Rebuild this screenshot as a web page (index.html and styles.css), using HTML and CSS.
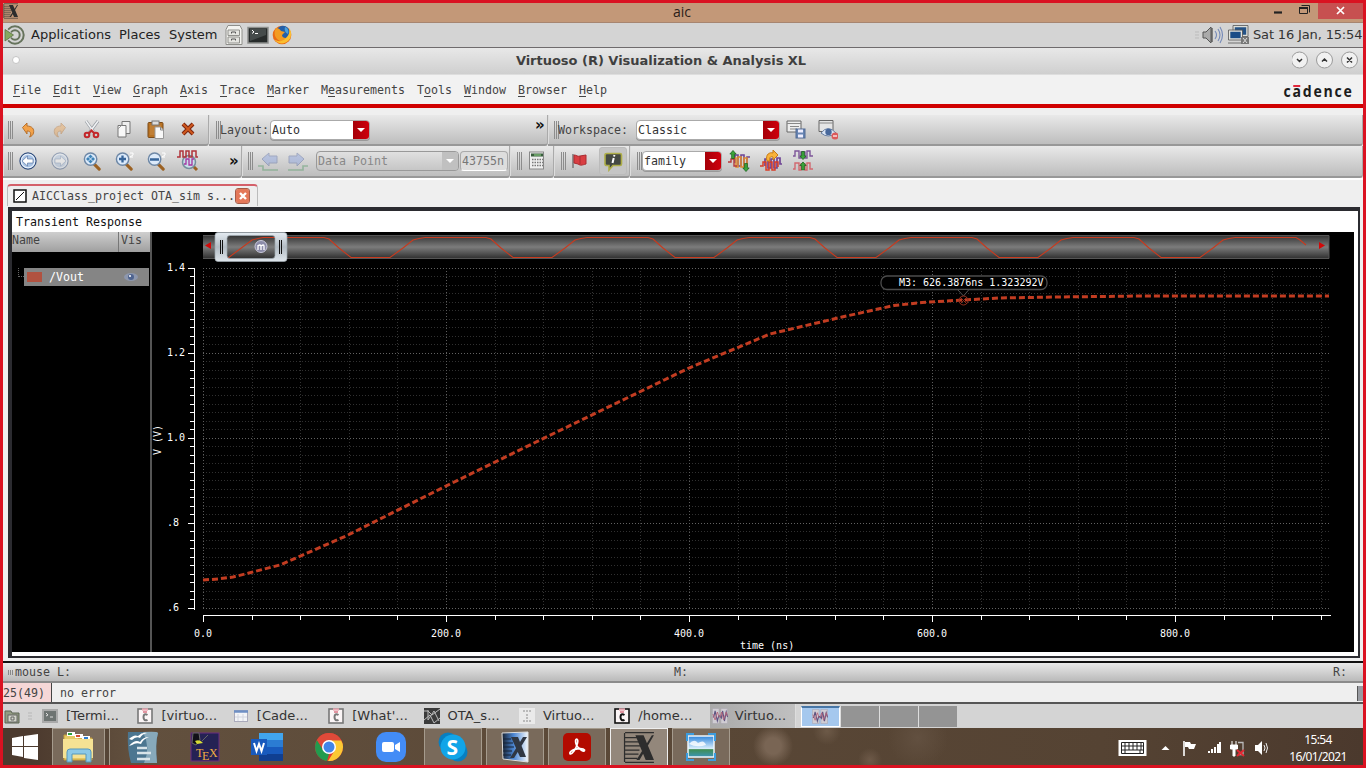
FILE: index.html
```html
<!DOCTYPE html>
<html lang="en">
<head>
<meta charset="utf-8">
<title>aic</title>
<link rel="stylesheet" href="styles.css">
</head>
<body>
<svg class="defs" width="0" height="0">
  <defs>
    <linearGradient id="bar" x1="0" y1="0" x2="0" y2="1"><stop offset="0" stop-color="#303030"/><stop offset=".5" stop-color="#7c7c7c"/><stop offset="1" stop-color="#2c2c2c"/></linearGradient>
    <linearGradient id="cap" x1="0" y1="0" x2="0" y2="1"><stop offset="0" stop-color="#e4ebf1"/><stop offset=".5" stop-color="#b3bcc4"/><stop offset="1" stop-color="#dfe6ec"/></linearGradient>
    <linearGradient id="sky" x1="0" y1="0" x2="0" y2="1"><stop offset="0" stop-color="#2f86dc"/><stop offset=".6" stop-color="#d9eefc"/><stop offset=".65" stop-color="#3f8d55"/><stop offset="1" stop-color="#3c95b8"/></linearGradient>
    <linearGradient id="xg"><stop offset="0" stop-color="#16202f"/><stop offset=".45" stop-color="#4b86d4"/><stop offset="1" stop-color="#f4f8fc"/></linearGradient>
    <symbol id="xwin" viewBox="0 0 32 32"><path d="M2 1.500H30M2 6.500H15M2 10.500H16M2 14.500H17M2 18.500H16M2 22.500H15M2 26.500H14M2 30.500H30M1.500 2V30" stroke="#2d2d2d" stroke-width="1.200" fill="none"/><path d="M12 4h8l10 24h-8zM28 4h2L16 28h-3z" fill="#2d2d2d"/></symbol>
    <symbol id="wave" viewBox="0 0 18 16" preserveAspectRatio="none"><path d="M.5.5h7.500v15H.5zM10 .5h7.500v15H10z" fill="#d0cdd3" stroke="#aaa6b0" stroke-width=".6"/><path d="M1 9h1l1.500-6L6 13l1.500-5H9l1.500 2L12 3l2 10 2-9 1.500 5" fill="none" stroke="#5c5280" stroke-width="1.200"/><path d="M1 6l2.500 6L6 4l2 5h1l2-5 2 8 3-8 1 4" fill="none" stroke="#b5637a" stroke-width=".9"/></symbol>
    <symbol id="cad" viewBox="0 0 16 16"><rect x="1" y="1" width="14" height="14" fill="#fbf5f6" stroke="currentColor" stroke-width="1.600"/><path d="M5 1.500h6" stroke="#e9aab4" stroke-width="2.400"/><path d="M6 4h4" stroke="#d25468" stroke-width="1.200"/><path d="M10.500 7C8 5.500 6.500 6.500 6.500 9s1.500 4.200 4 2.800" fill="none" stroke="currentColor" stroke-width="2"/></symbol>
    <symbol id="mag" viewBox="0 0 22 22"><path d="M12 13l6 6" stroke="#9b6122" stroke-width="3.200" stroke-linecap="round"/><circle cx="9" cy="8.500" r="6.500" fill="#dceafa" stroke="#6d87a6" stroke-width="1.500"/></symbol>
    <symbol id="nav" viewBox="0 0 20 20"><circle cx="10" cy="10" r="8" fill="#a9c3e4" stroke="#2f4c7c" stroke-width="1.300"/><circle cx="10" cy="10" r="6.800" fill="none" stroke="#e8f0fa" stroke-width="1.200"/><path d="M4 10l5.500-5v3H15v4H9.500v3z" fill="#fff" stroke="#4a6a98" stroke-width=".6"/></symbol>
    <symbol id="undo" viewBox="0 0 20 20"><path d="M4.500 7.500L9 3v3c5 0 7.500 3 6.500 7-.5 2-2 3.500-4 4 2-2.500 1.800-6-2.500-6v3z" fill="#f2a24a" stroke="#b36a22" stroke-width=".9"/></symbol>
    <symbol id="grn" viewBox="0 0 8 10"><path d="M4 .5l3.500 4h-2v5h-3v-5h-2z" fill="#3ba53b" stroke="#145e18" stroke-width=".8"/></symbol>
  </defs>
</svg>
<div class="screen">
  <header class="titlebar">
    <svg class="title-x" width="16" height="16"><use href="#xwin"/></svg>
    <span class="title-text">aic</span>
    <div class="win-buttons">
      <svg width="50" height="19"><path d="M5 9.500h8" stroke="#222" stroke-width="2.200"/><path d="M30.500 4.500h8v6h-8zM32.500 2.500h8v7" fill="none" stroke="#222"/><path d="M30 5h9" stroke="#222" stroke-width="2"/></svg>
      <div class="win-close"><svg width="9" height="9"><path d="M1 1l7 7M8 1L1 8" stroke="#fff" stroke-width="1.700"/></svg></div>
    </div>
  </header>

  <div class="panel">
    <svg width="22" height="22"><circle cx="12" cy="11" r="8.700" fill="none" stroke="#66735c" stroke-width="2"/><circle cx="12" cy="11" r="4.700" fill="none" stroke="#66735c" stroke-width="2"/><path d="M0 1l11 10L0 21z" fill="#d4d4d4"/><path d="M2 5.500l8.500 5.500L2 17z" fill="#86a85f" stroke="#596e43" stroke-width=".8"/></svg>
    <span class="p-app">Applications</span><span class="p-places">Places</span><span class="p-sys">System</span>
    <svg class="p-icons" width="68" height="22">
      <path d="M3 1.500h12l2 4v15H1v-15z" fill="#f3f3f0" stroke="#8e8e8a"/><path d="M3 6h11.500v5.500H3zM3 13h11.500v6H3z" fill="#e5e5e1" stroke="#91918d"/><path d="M6.500 9.500V8h4v1.500M6.500 16.500V15h4v1.500" stroke="#555" fill="none"/>
      <rect x="23" y="3.500" width="20" height="15.500" fill="#272b2b" stroke="#8d8f8d" stroke-width="1.500"/><path d="M25 5h16v6l-16 6z" fill="#454b4b"/><path d="M27 6l2 2-2 1.500M30 9.500h3" stroke="#fff" fill="none"/>
      <circle cx="57" cy="11" r="9.300" fill="#e96a16"/><circle cx="58" cy="8.500" r="6.800" fill="#245fa8"/><path d="M51 4c2 0 4 1 5 3l4 1-3 3c0 3 4 4 7 2-1 4-5 6-9 4-5-2-7-8-4-13z" fill="#f39b22"/><path d="M64 4c3 3 3 10-1 13-4 4-11 3-14-2 3 3 9 3 12-1 3-3 4-6 3-10z" fill="#fbbf31"/><path d="M60 3c3 1 4 4 3 7-2-1-4-3-3-7z" fill="#49a1dc"/>
    </svg>
    <div class="p-right">
      <svg width="60" height="22"><path d="M2 8h4M2 11h4M2 14h4" stroke="#bbb"/><path d="M10 8h3l5-5v16l-5-5h-3z" fill="#aaa" stroke="#555"/><path d="M19 4v14" stroke="#444" stroke-width="1.200"/><path d="M22 7q3 4 0 8M25 5q4 6 0 12M27 3q5 8 0 16" fill="none" stroke="#7489b8" stroke-width="1.100"/><path d="M41 2.500h13v9H41z" fill="#235287" stroke="#deded8" stroke-width="1.600"/><path d="M40 1.500h15v11H40z" fill="none" stroke="#555" stroke-width=".8"/><path d="M36.500 7h12v8h-12z" fill="#194c87" stroke="#e4e4de" stroke-width="1.600"/><path d="M35.500 6h14v10h-14zM35 19h13" fill="none" stroke="#555" stroke-width=".8"/><rect x="48" y="13" width="8" height="7" fill="#777"/><path d="M50 14l4 5M54 14l-4 5" stroke="#ddd"/></svg>
      <span>Sat 16 Jan, 15:54</span>
    </div>
  </div>

  <div class="apptitle">
    <i class="led"></i><span>Virtuoso (R) Visualization &amp; Analysis XL</span>
    <svg width="68" height="20"><g fill="#f1f1f1" stroke="#9a9a9a"><circle cx="7.500" cy="10" r="8"/><circle cx="32.500" cy="10" r="8"/><circle cx="57.500" cy="10" r="8"/></g><path d="M5 9l2.500 2.500L10 9M30 11.500l2.500-2.500 2.500 2.500M55 7.500l5 5M60 7.500l-5 5" fill="none" stroke="#333" stroke-width="1.500"/></svg>
  </div>

  <nav class="menu">
    <span><u>F</u>ile</span><span><u>E</u>dit</span><span><u>V</u>iew</span><span><u>G</u>raph</span><span><u>A</u>xis</span><span><u>T</u>race</span><span><u>M</u>arker</span><span>M<u>e</u>asurements</span><span>T<u>o</u>ols</span><span><u>W</u>indow</span><span><u>B</u>rowser</span><span><u>H</u>elp</span>
    <div class="logo">c<b>a</b>dence</div>
  </nav>

  <div class="toolbar t1">
    <section class="sec a1"><i class="grip"></i>
      <svg class="ic" viewBox="0 0 20 20"><use href="#undo"/></svg>
      <svg class="ic faded" viewBox="0 0 20 20"><use href="#undo" transform="matrix(-1 0 0 1 20 0)"/></svg>
      <svg class="ic" viewBox="0 0 20 20"><path d="M4 1l8.500 12M16 1L7 13" stroke="#999ea4" stroke-width="3"/><path d="M4 1l8.500 12M16 1L7 13" stroke="#f0f2f4" stroke-width="1.500"/><circle cx="5" cy="15" r="2.300" fill="none" stroke="#c3272b" stroke-width="2"/><circle cx="14" cy="15" r="2.300" fill="none" stroke="#c3272b" stroke-width="2"/><path d="M6.500 13.500l3-3 3 3" stroke="#c3272b" stroke-width="2" fill="none"/></svg>
      <svg class="ic" viewBox="0 0 20 20"><path d="M8 1.500h8v12H8z" fill="#eee" stroke="#777"/><path d="M4 5.500h8V17H4z" fill="#f8f8f8" stroke="#777"/><path d="M4 9l3.500-3.500" fill="none" stroke="#999"/></svg>
      <svg class="ic" viewBox="0 0 20 20"><rect x="2" y="2.500" width="15" height="15" rx="1" fill="#b97324" stroke="#7b4b18"/><rect x="4" y="5" width="11" height="10" fill="#c07f35"/><rect x="6" y="1" width="7" height="4" fill="#ddd" stroke="#777"/><path d="M9 7h5.500l3 3v8.500H9z" fill="#f8f8f8" stroke="#999"/><path d="M14.500 7v3h3" fill="none" stroke="#888"/></svg>
      <svg class="ic" viewBox="0 0 20 20"><path d="M5 4l10 10M15 4L5 14" stroke="#7d2611" stroke-width="4"/><path d="M5 4l10 10M15 4L5 14" stroke="#d0591e" stroke-width="1.800"/></svg>
    </section>
    <section class="sec b1"><i class="grip"></i><span class="lab">Layout:</span><div class="combo w100">Auto<i></i></div><strong class="more">»</strong></section>
    <section class="sec c1"><i class="grip"></i><span class="lab ws">Workspace:</span><div class="combo w144">Classic<i></i></div>
      <svg class="ic" viewBox="0 0 20 20"><path d="M1 1h14v11H1z" fill="#eee" stroke="#666"/><path d="M1 3.500h14M4 6.500h9M4 9h7" stroke="#888"/><rect x="10" y="9" width="9" height="9" fill="#6684b2" stroke="#526b93"/><path d="M12 9.500h5v3h-5zM12 14.500h5v3h-5z" fill="#eef"/></svg>
      <svg class="ic" viewBox="0 0 20 20"><path d="M1 .5h14v11H1z" fill="#e5e5e5" stroke="#666"/><path d="M1 3h14" stroke="#888"/><path d="M3 13q7-9 15 0-8 6-15 0z" fill="#dce6f4" stroke="#667da2"/><circle cx="10.500" cy="12" r="3.200" fill="#47679b"/><circle cx="17" cy="16" r="3.500" fill="#dc595b"/><path d="M15 16h4" stroke="#fff" stroke-width="1.200"/></svg>
    </section>
  </div>

  <div class="toolbar t2">
    <section class="sec a2"><i class="grip"></i>
      <svg class="ic" viewBox="0 0 20 20"><use href="#nav"/></svg>
      <svg class="ic faded" viewBox="0 0 20 20"><use href="#nav" transform="matrix(-1 0 0 1 20 0)"/></svg>
      <svg class="ic" viewBox="0 0 20 20"><use href="#mag" width="21" height="21"/><path d="M8.500 3.500l4.500 4.500-4.500 4.500L4 8z" fill="#3f84b8"/><path d="M6 5.500l5 5M11 5.500l-5 5" stroke="#dceafa"/></svg>
      <svg class="ic" viewBox="0 0 20 20"><use href="#mag" width="21" height="21"/><path d="M5 8h7M8.500 4.500v7" stroke="#37659a" stroke-width="2.300"/><path d="M16 2h3v2l-3 2h3" fill="none" stroke="#fff"/></svg>
      <svg class="ic" viewBox="0 0 20 20"><use href="#mag" width="21" height="21"/><path d="M4 8.500h9" stroke="#37659a" stroke-width="2.500"/><path d="M16 2h3v2l-3 2h3" fill="none" stroke="#fff"/></svg>
      <svg class="ic big" viewBox="0 0 22 22"><path d="M15 15l5 5" stroke="#9b6122" stroke-width="3"/><circle cx="12" cy="12" r="6.500" fill="#c9dfe9" stroke="#758e9d" stroke-width="1.500"/><path d="M0 7h3V1h3v6h3V1h3v6h3V1h4v6h2" fill="none" stroke="#b0333a" stroke-width="1.500"/><path d="M7 14h2V9h3v6h3V9h2" fill="none" stroke="#a533a1" stroke-width="1.300"/></svg>
      <strong class="more m2">»</strong>
    </section>
    <section class="sec b2"><i class="grip"></i>
      <svg class="ic n30 faded" viewBox="0 0 20 20"><path d="M0 15h5v4h15" fill="none" stroke="#45945a" stroke-width="1.600"/><path d="M4 8l7-6v3h8v7h-8v3z" fill="#829ee4" stroke="#4c609b"/></svg>
      <svg class="ic n30 faded" viewBox="0 0 20 20"><path d="M0 19h15v-4h5" fill="none" stroke="#45945a" stroke-width="1.600"/><path d="M16 8L9 2v3H1v7h8v3z" fill="#829ee4" stroke="#4c609b"/></svg>
      <div class="combo off w142">Data Point<i></i></div><div class="field">43755n</div>
    </section>
    <section class="sec c2"><i class="grip"></i><svg class="ic" viewBox="0 0 20 20"><rect x="2.500" y="1" width="14" height="17" fill="#eee" stroke="#888"/><path d="M4 4h12" stroke="#385d3c" stroke-width="3"/><path d="M7 4h7" stroke="#98df8d"/><path d="M5 8.500h11M5 11.500h11M5 14.500h11" stroke="#777" stroke-width="1.600" stroke-dasharray="1.500 1"/></svg></section>
    <section class="sec d2"><i class="grip"></i><svg class="ic flag" viewBox="0 0 20 20"><path d="M4 3v14" stroke="#777" stroke-width="1.500"/><path d="M5 4c3 0 3 2 6 1l6-1v9c-4 1-5 2-8 0l-4-1z" fill="#d93e42" stroke="#a92c31"/><path d="M11 5v8" stroke="#a92c31"/></svg><div class="info"><svg width="22" height="22"><path d="M5 3.500h13q1.500 0 1.500 1.500v9q0 1.500-1.500 1.500h-7L7 20v-4.500H5Q3 15.500 3 14V5q0-1.500 2-1.500z" fill="#444943" stroke="#aeae48" stroke-width="1.600"/><path d="M12.500 5l-.5 1.500M11.700 8L10.500 13" stroke="#fff" stroke-width="2"/></svg></div></section>
    <section class="sec e2"><i class="grip"></i><div class="combo w80">family<i></i></div>
      <svg class="ic big" viewBox="0 0 22 22"><path d="M7 13V5h3v11h3V5h3v11h3V7h3" fill="none" stroke="#6f4495" stroke-width="1.600"/><path d="M5 8h3v9h2V7h3v10h3V8h3v8" fill="none" stroke="#e08a2c" stroke-width="1.500"/><path d="M0 12h3v-3h3v7h3" fill="none" stroke="#b83a3a" stroke-width="1.400"/><use href="#grn" x="1" y="0" width="8" height="9"/><use href="#grn" width="8" height="9" transform="translate(22 22) rotate(180)"/></svg>
      <svg class="ic big" viewBox="0 0 22 22"><path d="M5 16V9h3v9h3V9h3v9h3V8h3v6h2" fill="none" stroke="#6f4495" stroke-width="1.700"/><path d="M0 16h3v-4h3v8h3v-8h3v8h3v-8h3v5" fill="none" stroke="#d73d27" stroke-width="1.500"/><path d="M7 11C5 4 10 2 13 3V0l5 5-5 5V7c-3-1-4 1-3 4z" fill="#f9b33b" stroke="#c67a18"/></svg>
      <svg class="ic big" viewBox="0 0 22 22"><path d="M1 6h2V1h4v7h2V2h4v6h2V1h3v5h3" fill="none" stroke="#7d5599" stroke-width="1.400"/><path d="M1 19h2v-6h4v7h2v-6h4v6h2v-7h3v6h3" fill="none" stroke="#d2686f" stroke-width="1.400"/><use href="#grn" x="7" y="11.500" width="8" height="9"/><use href="#grn" width="8" height="9" transform="translate(15 10) rotate(180)"/></svg>
    </section>
  </div>

  <div class="tabs"><div class="tab"><svg width="14" height="14"><rect x="1" y="1" width="12" height="12" fill="#fff" stroke="#111" stroke-width="1.500"/><path d="M3 11l8-8" stroke="#111"/></svg><span>AICClass_project OTA_sim s...</span><i class="tabx"><svg width="14" height="14"><path d="M4 4l6 6M10 4l-6 6" stroke="#fff" stroke-width="2.400"/></svg></i></div></div>

  <main class="frame">
    <div class="pane">
      <div class="chart-title">Transient Response</div>
      <div class="body">
        <aside class="side">
          <div class="side-head"><span>Name</span><span class="vis">Vis</span></div>
          <div class="side-row"><i class="tree"></i><div class="trace"><i class="swatch"></i><span>/Vout</span><svg width="16" height="12"><ellipse cx="8" cy="6" rx="7" ry="4" fill="#8d97ad"/><circle cx="8" cy="6" r="3" fill="#4f6490"/><circle cx="7" cy="5" r="1" fill="#fff"/></svg></div></div>
        </aside>
        <svg class="plot" width="1202" height="420" viewBox="152 232 1202 420">
          <rect x="203" y="235" width="1126" height="24" fill="url(#bar)"/><path d="M203 235.500h1126v23H203" fill="none" stroke="#555"/>
          <path id="overview" fill="none" stroke="#c83a1e" stroke-width="1.100"/>
          <path d="M211 242v7l-6-3.500zM1319 242v7l6-3.500z" fill="#d20808"/>
          <path d="M218 232.500h66a3 3 0 0 1 3 3v23a3 3 0 0 1-3 3h-66a3 3 0 0 1-3-3v-23a3 3 0 0 1 3-3zM230 235.500q-3 0-3 3v17q0 3 3 3h42q3 0 3-3v-17q0-3-3-3z" fill="url(#cap)" fill-rule="evenodd" stroke="#9ca6ae" stroke-width=".7"/>
          <path d="M220.500 240v14M222.500 240v14M279.500 240v14M281.500 240v14" stroke="#111"/>
          <circle cx="261" cy="246.500" r="6" fill="#8b8ba8" stroke="#c9c9da"/><path d="M258 250v-5M258 246q2-2 3 0v4M261 246q3-2 3 0v4" fill="none" stroke="#fff" stroke-width="1.300"/>
          <g id="grid"></g>
          <g class="tick">
            <text x="167" y="271">1.4</text><text x="167" y="356">1.2</text><text x="167" y="441">1.0</text><text x="167" y="526">.8</text><text x="167" y="611">.6</text>
            <text x="194" y="637">0.0</text><text x="431" y="637">200.0</text><text x="674" y="637">400.0</text><text x="917" y="637">600.0</text><text x="1160" y="637">800.0</text>
            <text x="740" y="649">time (ns)</text><text transform="translate(160.500 455) rotate(-90)">V (V)</text>
          </g>
          <path d="M203 580L218 579 233 577 249 573 280 565 346 536 446 486 534 443 689 368 770 334 842 317 894 305.500 922 302.500 963 300 999 298 1059 297 1100 296.500 1140 296H1329" fill="none" stroke="#c23c21" stroke-width="3" stroke-dasharray="6 3"/>
          <rect x="881" y="276" width="166" height="13.500" rx="6" fill="#000" stroke="#4c4c4c" stroke-width="1.300"/><path d="M958 290l5.500 6 5-6" fill="#000" stroke="#555"/>
          <g fill="none" stroke="#8e2d1c"><circle cx="963.500" cy="300.500" r="4.500"/><path d="M960 297l7 7M967 297l-7 7"/></g>
          <g class="tick"><text x="899" y="286">M3: 626.3876ns 1.323292V</text></g>
        </svg>
      </div>
    </div>
  </main>

  <div class="mouse"><i class="mini"></i><span class="ml">mouse L:</span><span class="mm">M:</span><span class="mr">R:</span></div>
  <div class="status"><span class="count">25(49)</span><span class="noerr">no error</span><i class="corner"></i></div>

  <div class="tasks">
    <div class="desk"><svg width="16" height="16"><path d="M1 3h6l1 2h7v10H1z" fill="#929c82" stroke="#5d6454"/><rect x="4" y="7" width="9" height="7" fill="#d2d5c9" stroke="#666"/><path d="M7 9h3v3H7z" fill="none" stroke="#666"/></svg><svg width="10" height="16"><path d="M3 5h4M3 8h4M3 11h4" stroke="#b7b7b7"/></svg></div>
    <div class="task"><svg width="16" height="16"><rect x="1" y="2" width="14" height="12" fill="#6e7472" stroke="#aaa" stroke-width="2"/><path d="M4 5l2 2-2 1M8 9h3" stroke="#ddd" fill="none"/></svg>[Termi...</div>
    <div class="task"><svg width="16" height="16" class="dim"><use href="#cad"/></svg>[virtuo...</div>
    <div class="task"><svg width="16" height="16"><rect x="1.500" y="2.500" width="13" height="11" fill="#f3f4f7" stroke="#aab"/><path d="M1 3.500h14" stroke="#6e8fc4" stroke-width="2.500"/><path d="M2 9h12M5 6v7M10 6v7" stroke="#d2d5df"/></svg>[Cade...</div>
    <div class="task"><svg width="16" height="16" class="dim"><use href="#cad"/></svg>[What'...</div>
    <div class="task"><svg width="16" height="16"><rect width="16" height="16" fill="#3b3b3b"/><path d="M0 3h4l4 4 8-6M0 12l6-5 4 8 6-5M4 2v10l6-9 5 10" stroke="#bbb" fill="none"/></svg>OTA_s...</div>
    <div class="task"><svg width="16" height="16"><rect width="16" height="16" fill="#eaeaea"/><path d="M4 3h8M7 7h2M7 10h2M4 13h8" stroke="#aaa" stroke-width="1.500" stroke-dasharray="2 1"/></svg>Virtuo...</div>
    <div class="task"><svg width="16" height="16" class="blk"><use href="#cad"/></svg>/home...</div>
    <div class="task active"><svg width="16" height="16"><use href="#wave"/></svg>Virtuo...</div>
    <div class="pager"><i class="on"><svg width="16" height="15"><use href="#wave"/></svg></i><i></i><i></i><i></i></div>
  </div>

  <footer class="taskbar">
    <div class="start"><svg width="28" height="28"><path d="M1 5l11-2v10H1zM13 3l14-2v12H13zM1 14h11v10L1 22zM13 14h14v13l-14-2z" fill="#fff"/></svg></div>
    <div class="app open stack"><svg width="34" height="34"><path d="M3 5h12l2 3h14v22H3z" fill="#e5c964" stroke="#c39d3e"/><path d="M6 2h8v4H6zM14 4h8v4h-8zM21 6h8v4h-8z" fill="#fff"/><path d="M7 3h4v2H7z" fill="#2ca33d"/><path d="M15 5h4v2h-4z" fill="#d64d32"/><path d="M23 7h4v2h-4z" fill="#2e7ed0"/><path d="M2 9h30v19H2z" fill="#f5e294"/><path d="M6 32V22q0-3 3-3h18q3 0 3 3v10h-5v-8H11v8z" fill="#8cc9e7" stroke="#5798bb"/></svg></div>
    <div class="app"><svg width="34" height="34"><path d="M2 2h21q4 0 9 1-3 10-1 30H5Q1 20 2 2z" fill="#4c7690"/><path d="M17 2q15-1 15 1-3 10-1 30H18q7-15-1-31z" fill="#87a9bb"/><path d="M3 9q5-5 9-3 4-4 9-3-5 1-7 5-4-2-8 2zM3 16q6-7 11-4 3-5 9-5-6 2-8 7-5-2-9 1z" fill="#fff"/><path d="M11 18h10M11 23h14M11 29h13" stroke="#d9e4e9" stroke-width="2.500"/></svg></div>
    <div class="app"><svg width="30" height="30"><rect x="1" y="1" width="28" height="28" fill="#252254" stroke="#6b2d80"/><path d="M3 1h6l1 7-4 5-4-2zM12 9l6-6" fill="#101018" stroke="#666"/><path d="M5 9q5-2 8 2l-6 1z" fill="#d7dd35"/><text x="6" y="25" class="tex">T</text><text x="12" y="28" class="tex">E</text><text x="19" y="25" class="tex">X</text></svg></div>
    <div class="app"><svg width="34" height="30"><path d="M9 1h24v28H9z" fill="#1b5cbd"/><path d="M9 1h24v7H9z" fill="#41a5ee"/><path d="M9 8h24v7H9z" fill="#2b7cd3"/><path d="M9 15h24v7H9z" fill="#185abd"/><path d="M9 22h24v7H9z" fill="#103f91"/><rect x="1" y="7" width="16" height="16" fill="#185abd"/><path d="M4 11l2.500 8L9 12l2.500 7 2.500-8" fill="none" stroke="#fff" stroke-width="2"/></svg></div>
    <div class="app"><svg width="30" height="30" viewBox="0 0 30 30"><circle cx="15" cy="15" r="14" fill="#e33b2e"/><path d="M3 8l6 10 6 4-2 7A14 14 0 0 1 3 8z" fill="#229b4e"/><path d="M15 8h12a14 14 0 0 1-13 21l7-11z" fill="#fcc934"/><path d="M15 8.500h12.500A14 14 0 0 0 3 8l6 9z" fill="#df4a39"/><circle cx="15" cy="15" r="7" fill="#fff"/><circle cx="15" cy="15" r="5.500" fill="#4285e8"/></svg></div>
    <div class="app"><svg width="32" height="32"><rect x="1" y="1" width="30" height="30" rx="10" fill="#438cf6"/><rect x="7" y="11" width="12" height="10" rx="2" fill="#fff"/><path d="M20 14l5-3v10l-5-3z" fill="#fff"/></svg></div>
    <div class="app open"><svg width="32" height="32"><circle cx="11" cy="11" r="9.500" fill="#087fc1"/><circle cx="21" cy="21" r="9.500" fill="#087fc1"/><circle cx="16" cy="16" r="12.500" fill="#11a5e8"/><text x="9.500" y="23.500" class="skype">S</text></svg></div>
    <div class="app open"><svg width="30" height="32"><path d="M2 2l26-1v30L3 28z" fill="url(#xg)" stroke="#ddd"/><path d="M3 8h8M3 12h10M3 16h11M3 20h9M3 24h8" stroke="#172335"/><path d="M11 6h7l8 20h-6zM23 6h4L14 27h-4z" fill="#303743"/></svg></div>
    <div class="app open"><svg width="30" height="30"><rect x="1" y="1" width="28" height="28" rx="5" fill="#b30b00"/><path d="M14.500 7c2.500 0 1 7-2.500 12-3 4-4.500 3.500-4 1.500 2-4 13-5 14.500-2.500.5 3-6-.5-8-5-1.500-3-1-6 0-6z" fill="none" stroke="#fff" stroke-width="1.700"/></svg></div>
    <div class="app open current"><svg width="33" height="33"><use href="#xwin"/></svg></div>
    <div class="app open"><svg width="32" height="28"><rect x="3" y="3" width="26" height="21" fill="url(#sky)" stroke="#edf6fc" stroke-width="1.500"/><path d="M4 11q5-6 9-1 6-4 8 2-9 3-17-1z" fill="#fff" opacity=".8"/><path d="M2 8V1h7M23 1h7v7M30 20v7h-7M9 27H2v-7" fill="none" stroke="#3c9cde" stroke-width="2"/></svg></div>
    <div class="tray">
      <svg width="156" height="24"><rect x=".5" y="5" width="28" height="16" fill="#fff"/><path d="M3.500 7.500h22v11h-22zM3 11h23M3 15h23M7 8v7M11 8v7M15 8v7M19 8v7M23 8v7M7 15v3M22 15v3" fill="none" stroke="#222"/><path d="M43.500 15l4-4 4 4z" fill="#fff"/><path d="M66 6v15" stroke="#fff" stroke-width="1.600"/><path d="M67 7h5l1 2h5l-2 5h-5l-1-2h-3z" fill="#fff"/><path d="M91 18v-2M94 18v-4M97 18v-6M100 18V9M102 18V7" stroke="#fff" stroke-width="2"/><path d="M114 6v4M118 6v4M112.500 10h7v4h-2.500v7h-2v-7h-2.500z" stroke="#fff" fill="#fff"/><path d="M120 7.500h5v12h-5" fill="none" stroke="#bbb" stroke-width="1.300"/><path d="M119 15l7 6M126 15l-7 6" stroke="#e32832" stroke-width="2"/><path d="M137 10h3l4-4v14l-4-4h-3z" fill="#fff"/><path d="M146 10q2 3 0 6M148 8q3 5 0 10" fill="none" stroke="#eee"/></svg>
      <div class="clock"><div>15:54</div><div>16/01/2021</div></div>
    </div>
  </footer>
</div>
<script src="app.js"></script>
</body>
</html>
```
FILE: styles.css
```css
* { box-sizing: border-box; }
body { margin: 0; font-family: "DejaVu Sans", sans-serif; font-size: 13px; color: #222; }
.defs { position: absolute; }
svg { display: block; flex: none; }
i { font-style: normal; }
.screen { width: 1366px; height: 768px; border: 3px solid #da1221; display: flex; flex-direction: column; overflow: hidden; background: #efefef; }
.screen > * { flex: none; }

.titlebar { height: 20px; background: #c39878; border-bottom: 1px solid #a78570; display: flex; }
.title-x { margin-right: 102px; }
.title-text { width: 20px; margin-left: 552px; font: 14px/18px "Open Sans", sans-serif; color: #2b2018; }
.win-buttons { display: flex; margin-left: auto; }
.win-buttons > svg { margin-right: -1px; }
.win-close { width: 45px; height: 16px; background: #c75050; display: flex; align-items: center; justify-content: center; padding-bottom: 2px; }

.panel { height: 25px; background: #d4d4d4; border-bottom: 1px solid #6f6b6d; display: flex; align-items: center; white-space: nowrap; padding-bottom: 1px; }
.p-app { width: 88px; margin-left: 6px; letter-spacing: .05px; }
.p-places { width: 50px; }
.p-sys { width: 56px; }
.p-right { margin-left: auto; display: flex; align-items: center; }
.p-right span { width: 110px; color: #333; letter-spacing: -.15px; }
.apptitle { height: 27px; background: linear-gradient(#e8e8e8, #cfcfcf); border-bottom: 1px solid #dedede; display: flex; align-items: center; padding: 0 3px 2px 9px; }
.led { width: 8px; height: 8px; border-radius: 50%; background: #fff; border: 1px solid #c4c4c4; }
.apptitle span { flex: 1; text-align: center; font-weight: bold; font-size: 13px; color: #3f3f3f; padding-left: 10px; letter-spacing: -.02px; }

.menu, .toolbar, .tab, .chart-title, .side, .mouse, .status { font-family: "DejaVu Sans Mono", monospace; font-size: 11.63px; color: #444; white-space: nowrap; }
.menu { height: 33px; border-bottom: 4px solid #d00000; background: #f2f2f2; display: flex; gap: 12px; padding: 0 9px 0 10px; line-height: 30px; }
.menu u { text-underline-offset: 2px; }
.logo { margin-left: auto; font: 700 16px/33px "Open Sans", sans-serif; color: #1d1d1d; letter-spacing: 2px; transform: scaleX(.88); transform-origin: right; }
.logo b { font-weight: 700; background: linear-gradient(#e0283c, #e0283c) 1px 5px / 8px 2px no-repeat; }

.toolbar { display: flex; width: 1360px; }
.t1 { height: 38px; border-top: 7px solid #efefef; }
.t2 { height: 32px; }
.sec { display: flex; align-items: center; background: linear-gradient(#e9e9e9, #bdbdbd); border-bottom: 2px solid #989898; border-right: 1px solid #aaa; border-radius: 0 0 3px 0; box-shadow: inset 1px 0 #ddd; padding-left: 5px; height: 100%; }
.grip { width: 5px; height: 18px; background: repeating-linear-gradient(90deg, #8c8c8c 0 1px, transparent 1px 2px); flex: none; }
.ic { width: 20px; height: 20px; margin: 0 6px; }
.ic.big { width: 22px; height: 24px; margin: 0 5px; }
.a1 .grip, .a2 .grip { margin-right: -1px; }
.faded { opacity: .4; }
.a1 { width: 206px; } .b1 { width: 339px; padding-left: 7px; } .c1 { flex: 1; padding-left: 6px; }
.a2 { width: 239px; } .b2 { width: 268px; padding-left: 6px; } .c2 { width: 44px; padding-left: 7px; } .d2 { width: 76px; padding-left: 7px; } .e2 { flex: 1; padding-left: 7px; }
.lab { width: 50px; flex: none; }
.b1 .grip { margin-right: -1px; }
.c1 .grip { margin-right: -1px; }
.lab.ws { width: 78px; }
.combo { height: 20px; background: #fff; border: 1px solid #aaa; border-radius: 4px; box-shadow: 0 1px #999; display: flex; align-items: center; justify-content: space-between; padding-left: 1px; color: #333; flex: none; overflow: hidden; }
.combo i { width: 16px; height: 20px; background: linear-gradient(90deg, #a60009, #ce000c); flex: none; }
.combo i::after { content: ""; display: block; border: 4px solid transparent; border-top-color: #fff; margin: 8px 4px 0; }
.w100 { width: 100px; } .w144 { width: 144px; } .w142 { width: 143px; margin-left: 3px; } .w80 { width: 80px; margin-right: 1px; }
.combo.off { background: transparent; color: #888; border-color: #999; box-shadow: none; }
.off i { background: #c0c0c0; }
.field { width: 48px; height: 20px; margin-left: 1px; border: 1px solid #aaa; border-radius: 4px; color: #777; line-height: 18px; padding-left: 1px; background: #ddd; border-bottom-color: #fff; }
.more { margin-left: 165px; margin-bottom: 9px; font: bold 15px "DejaVu Sans", sans-serif; color: #111; }
.more.m2 { margin: 0 0 0 25px; }
.n30 { margin: 0 5px; }
.c2 .ic { margin: 0 5px; }
.flag { margin: 0 4px 0 3px; }
.info { width: 28px; height: 28px; margin-left: 6px; background: #c5c5c5; border: 1px solid #bbb; border-radius: 3px; padding: 2px; }

.tabs { height: 27px; border-top: 2px solid #fff; padding: 4px 0 0 4px; margin-bottom: 2px; }
.tab { width: 251px; height: 22px; border: 1px solid #bbb; border-top: 2px solid #d4606a; border-bottom: 0; border-radius: 4px 4px 0 0; display: flex; align-items: center; padding-left: 5px; background: #eee; }
.tab span { width: 209px; padding-left: 5px; }
.tabx { width: 13px; height: 14px; background: #e47859; border-radius: 2px; outline: 1px solid #a85b48; }

.frame { height: 451px; margin: 0 3px 0 5px; border: solid #2b2b30; border-width: 4px 2px 2px 4px; background: #fff; width: 1352px; }
.pane { width: 1342px; }
.chart-title { height: 21px; line-height: 22px; padding-left: 4px; color: #111; }
.body { display: flex; width: 1342px; height: 420px; background: #000; }
.side { width: 140px; border-right: 2px solid #555; }
.side-head { height: 20px; display: flex; background: linear-gradient(#cfcfcf, #9f9f9f); line-height: 16px; }
.side-head .vis { margin-left: auto; width: 32px; border-left: 1px solid #777; padding-left: 2px; }
.side-row { display: flex; margin-top: 16px; height: 18px; }
.tree { width: 6px; height: 9px; border-left: 1px dotted #666; border-bottom: 1px dotted #666; margin: 0 0 0 6px; }
.trace { width: 125px; background: #858585; display: flex; align-items: center; color: #fff; padding-left: 3px; }
.swatch { width: 15px; height: 10px; background: #b15240; margin-right: 7px; }
.trace span { width: 74px; }
.tick text { font: 10px "DejaVu Sans Mono", monospace; fill: #fff; white-space: pre; }
.tex { font: 12px "Liberation Serif", serif; fill: #f1ad43; }
.skype { font: bold 21px "Open Sans", sans-serif; fill: #fff; }

.mouse { height: 22px; border-top: 2px solid #111; border-bottom: 2px solid #8b8b8b; margin-top: 3px; background: linear-gradient(#e9e9e9, #bababa); display: flex; align-items: center; }
.mini { width: 5px; height: 5px; background: repeating-linear-gradient(90deg, #888 0 1px, transparent 1px 2px); margin: 0 2px 0 5px; }
.ml { width: 659px; } .mm { width: 659px; }
.status { height: 21px; border-bottom: 2px solid #555; display: flex; line-height: 20px; }
.count { width: 49px; background: #f6d7d7; border-right: 1px solid #444; }
.noerr { padding-left: 8px; }
.corner { margin-left: auto; width: 6px; height: 15px; background: #999ba1; margin-top: 3px; border-left: 1px solid #555; }

.tasks { height: 24px; background: #d4d4d4; display: flex; align-items: center; color: #333; }
.desk { width: 36px; display: flex; padding-left: 1px; gap: 5px; }
.task { width: 95.4px; height: 24px; padding: 0 0 1px 3px; display: flex; align-items: center; gap: 8px; white-space: nowrap; letter-spacing: .05px; }
.dim { color: #777; } .blk { color: #111; }
.task.active { width: 86px; margin-left: 3px; padding-left: 2px; background: linear-gradient(90deg, #aaa, #c0c0c0); gap: 7px; border-right: 1px solid #ddd; }
.pager { display: flex; gap: 1px; margin-left: 5px; height: 21px; background: #ddd; }
.pager i { width: 38px; background: #949494; }
.pager .on { background: #a5c8ee; border: 1px solid #fff; border-top: 2px solid #4776a6; width: 39px; display: flex; justify-content: center; align-items: center; }

.taskbar { height: 37px; display: flex; background: radial-gradient(circle at 770px 18px, #796554 0 8px, rgba(121, 101, 84, 0) 20px), radial-gradient(circle at 824px 3px, #6d5a48, rgba(109, 90, 72, 0) 14px), radial-gradient(circle at 867px 32px, #6d5948, rgba(109, 89, 72, 0) 12px), radial-gradient(circle at 915px 10px, #625040, rgba(98, 80, 64, 0) 30px), linear-gradient(90deg, #4c3a2e 30px, #62503e 130px, #594736 700px, #554333 1100px, #4b392d); }
.start { width: 47px; padding: 5px 0 0 8px; }
.app { width: 58px; margin: 0 2px; display: flex; align-items: center; justify-content: center; overflow: hidden; flex: none; }
.open { background: #796a5b; border: 1px solid #a59b8d; border-bottom: 0; }
.stack { box-shadow: inset -4px 0 #564637, inset -5px 0 #a59b8d; padding-right: 6px; }
.current { background: #93877b; border-color: #eee; }
.tray { margin-left: auto; display: flex; align-items: center; padding-right: 9px; color: #fff; }
.tray > svg { margin-right: 1px; }
.clock { width: 72px; text-align: center; font: 12px/17px "Noto Sans", sans-serif; letter-spacing: -.65px; padding-top: 3px; white-space: nowrap; margin-left: 7px; }
```
FILE: app.js
```js
// Axes, dotted grid and the overview waveform.
const rows = [], marks = [];
const line = (d, color, dash) =>
  `<path d="${d}" stroke="${color}" fill="none" shape-rendering="crispEdges"${dash ? ' stroke-dasharray="1 2"' : ''}/>`;

for (let i = 0; i <= 40; i++) {
  const y = Math.floor(268 + i * 8.5) + 0.5;
  const major = i % 10 === 0;
  rows.push(line(`M203 ${y}H1329`, major ? '#626262' : '#303030', true));
  marks.push(`M${major ? 188 : 190} ${y}H195`);
}
for (let i = 0; i <= 23; i++) {
  const x = Math.round(203 + i * 48.6) + 0.5;
  const major = i % 5 === 0;
  rows.push(line(`M${x} 268V609`, major ? '#5c5c5c' : '#343434', true));
  marks.push(`M${x} 615V${major ? 622 : 620}`);
}
marks.push('M194.5 268V610', 'M203 615.5H1331');
document.getElementById('grid').innerHTML = rows.join('') + line(marks.join(''), '#fff', false);

let wave = 'M228 258L240 249L252 240L258 238.500';
for (let t = 263; t < 1200; t += 162) {
  wave += `L${t} 237.500H${t + 61}L${t + 66} 239L${t + 76} 248L${t + 88} 257.500H${t + 127}L${t + 140} 248L${t + 150} 240L${t + 156} 238.500`;
}
wave += 'L1235 237.500H1296L1300 240L1306 245';
document.getElementById('overview').setAttribute('d', wave);
```
